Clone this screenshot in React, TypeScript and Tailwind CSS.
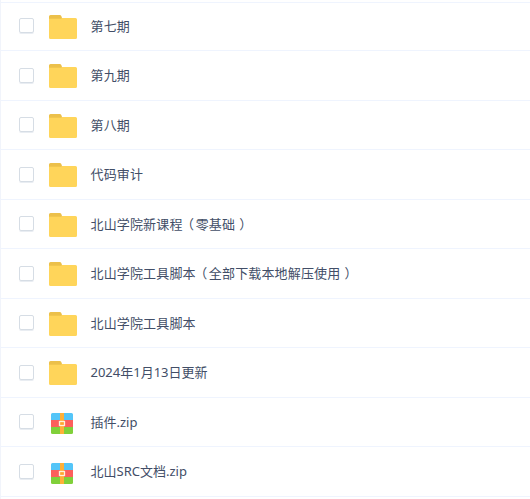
const items = [
  { name: "第七期", kind: "folder" },
  { name: "第九期", kind: "folder" },
  { name: "第八期", kind: "folder" },
  { name: "代码审计", kind: "folder" },
  { name: "北山学院新课程（零基础）", kind: "folder" },
  { name: "北山学院工具脚本（全部下载本地解压使用）", kind: "folder" },
  { name: "北山学院工具脚本", kind: "folder" },
  { name: "2024年1月13日更新", kind: "folder" },
  { name: "插件.zip", kind: "zip" },
  { name: "北山SRC文档.zip", kind: "zip" },
];

function FolderIcon() {
  return (
    <svg width="28" height="24" viewBox="0 0 28 24">
      <path d="M0 8V1.5A1.5 1.5 0 0 1 1.5 0h9.2c.8 0 1.3.4 1.6 1.1l.9 2.4V8z" fill="#ecc04a" />
      <path d="M0 3.8h12l1-.8h13.5A1.5 1.5 0 0 1 28 4.5v18a1.5 1.5 0 0 1-1.5 1.5h-25A1.5 1.5 0 0 1 0 22.5z" fill="#ffd55a" />
    </svg>
  );
}

function ZipIcon() {
  return (
    <svg className="mt-[1.5px] mr-0.5" width="22" height="21" viewBox="0 0 22 21">
      <path d="M0 7V1.5A1.5 1.5 0 0 1 1.5 0h19A1.5 1.5 0 0 1 22 1.5V7z" fill="#54c5f8" />
      <path d="M0 7h22v7H0z" fill="#fc5f5c" />
      <path d="M0 14h22v5.5a1.5 1.5 0 0 1-1.5 1.5h-19A1.5 1.5 0 0 1 0 19.5z" fill="#80d03a" />
      <path d="M9 0h4v21H9z" fill="#ffb038" />
      <rect x="8.5" y="8.5" width="5" height="4" fill="#ffa52e" stroke="#fff3dc" strokeWidth="1.3" />
    </svg>
  );
}

// full-width parentheses sit in the middle of their cell
function FileName({ name }: { name: string }) {
  const latin = /[a-z0-9]/i.test(name);
  return (
    <span className={`mb-px ml-[13.5px] text-[13px] leading-5 text-[#424e67] ${latin ? "tracking-normal" : "tracking-[0.15px]"}`}>
      {name.split(/([（）])/).map((part, i) => {
        if (part === "（") return <span key={i} className="relative -left-[1.5px]">{part}</span>;
        if (part === "）") return <span key={i} className="relative left-1">{part}</span>;
        return part;
      })}
    </span>
  );
}

export default function App() {
  return (
    <main className="h-[499px] w-[530px] overflow-hidden border-l border-[#f1f4fb] bg-white pt-[1.5px] font-['Noto_Sans','Noto_Sans_CJK_SC',sans-serif]">
      <ul className="border-t border-[#eff4fe]">
        {items.map((item) => (
          <li key={item.name} className="flex h-[49.5px] items-center border-b border-[#eff4fe] pl-[18px] first:h-[48.75px]">
            <span className="mb-px size-[15px] rounded-[2px] border border-[#d6dde5] shadow-[0_1px_0_#e9edf2]" />
            <span className="mt-[1.5px] ml-[15px] flex w-7 justify-center">
              {item.kind === "zip" ? <ZipIcon /> : <FolderIcon />}
            </span>
            <FileName name={item.name} />
          </li>
        ))}
      </ul>
    </main>
  );
}
